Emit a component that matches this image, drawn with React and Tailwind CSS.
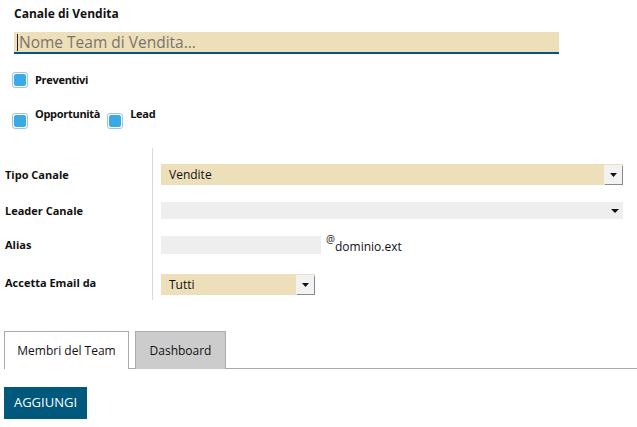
import React from 'react';

const font = { fontFamily: '"Open Sans", "Liberation Sans", sans-serif' };

function Check({ className = '' }) {
  return (
    <span className={`inline-flex h-[16px] w-[16px] shrink-0 items-center justify-center rounded-[3px] border border-[#9fc4dc] bg-white ${className}`}>
      <span className="h-[12px] w-[12px] rounded-[2px] bg-[#3aaae6]" />
    </span>
  );
}

function DropBtn() {
  return (
    <span className="flex h-[19px] w-[18px] items-center justify-center bg-[#f2f2f2] shadow-[1px_1px_0_#8a8a8a]">
      <svg width="7" height="4" viewBox="0 0 7 4"><path d="M0 0h7L3.5 4z" fill="#111" /></svg>
    </span>
  );
}

export default function App() {
  return (
    <div className="relative h-[427px] w-[637px] bg-white text-[#111]" style={font}>
      <div className="pl-[14px] pt-[6px]">
        <div className="text-[12px] font-bold leading-[16px]">Canale di Vendita</div>
        <div className="mt-[10px] flex h-[22px] w-[545px] items-center border-b-2 border-[#00587c] bg-[#eedfbb] pl-[3px]">
          <span className="h-[17px] w-px bg-[#222]" />
          <span className="ml-[1px] text-[15.5px] leading-[20px] text-[#7a7468]">Nome Team di Vendita...</span>
        </div>
      </div>

      <div className="mt-[18px] flex items-center pl-[12px]">
        <Check />
        <span className="ml-[7px] text-[11px] font-bold leading-[14px] tracking-[-0.3px]">Preventivi</span>
      </div>
      <div className="mt-[19px] flex items-start pl-[12px]">
        <Check className="mt-[6px]" />
        <span className="ml-[7px] text-[11px] font-bold leading-[14px] tracking-[-0.3px]">Opportunità</span>
        <Check className="ml-[7px] mt-[6px]" />
        <span className="ml-[7px] text-[11px] font-bold leading-[14px] tracking-[-0.3px]">Lead</span>
      </div>

      <div className="mt-[19px] flex">
        <div className="w-[153px] border-r border-[#d8d8d8] pl-[5px] pt-[16px] pb-[6px] text-[11px] font-bold">
          <div className="flex h-[22px] items-center">Tipo Canale</div>
          <div className="mt-[14px] flex h-[22px] items-center">Leader Canale</div>
          <div className="mt-[12px] flex h-[22px] items-center">Alias</div>
          <div className="mt-[16px] flex h-[22px] items-center">Accetta Email da</div>
        </div>
        <div className="pl-[8px] pt-[16px] text-[12px]">
          <div className="flex h-[21px] w-[462px] items-center justify-between bg-[#eedfbb] pl-[8px] pr-[1px]">
            <span>Vendite</span>
            <DropBtn />
          </div>
          <div className="mt-[17px] flex h-[17px] w-[462px] items-center justify-end bg-[#eeeeee] pr-[4px]">
            <svg width="8" height="4" viewBox="0 0 8 4"><path d="M0 0h8L4 4z" fill="#111" /></svg>
          </div>
          <div className="mt-[17px] flex items-start">
            <div className="h-[18px] w-[160px] bg-[#eeeeee]" />
            <span className="ml-[5px] -mt-[4px] text-[10px]">@</span>
            <span className="mt-[2px] text-[12px]">dominio.ext</span>
          </div>
          <div className="mt-[18px] flex h-[21px] w-[154px] items-center justify-between bg-[#eedfbb] pl-[8px] pr-[1px]">
            <span>Tutti</span>
            <DropBtn />
          </div>
        </div>
      </div>

      <div className="mt-[31px] flex items-end pl-[4px]">
        <div className="flex h-[38px] w-[125px] items-center justify-center border border-b-0 border-[#aaaaaa] bg-white text-[12px]">Membri del Team</div>
        <div className="h-px w-[6px] bg-[#aaaaaa]" />
        <div className="flex h-[38px] w-[91px] items-center justify-center border border-b-0 border-[#aaaaaa] bg-[#cccccc] text-[12px]">Dashboard</div>
        <div className="h-px flex-1 bg-[#aaaaaa]" />
      </div>

      <div className="mt-[18px] pl-[4px]">
        <button className="h-[32px] w-[83px] bg-[#00587c] text-[13px] text-white">AGGIUNGI</button>
      </div>
    </div>
  );
}
